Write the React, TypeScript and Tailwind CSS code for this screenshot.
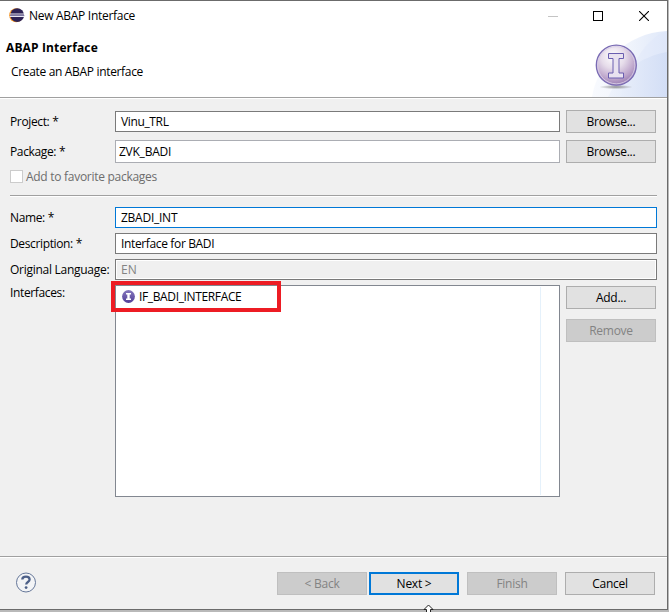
import type { ReactNode } from "react";

function EclipseIcon() {
  return (
    <svg width="16" height="16" viewBox="0 0 16 16" className="shrink-0">
      <circle cx="7.2" cy="7.2" r="7" fill="#f7941e" />
      <circle cx="8.2" cy="7.2" r="6.9" fill="#2c2255" />
      <path d="M0.7 6h14.600M0.7 8.500h14.600" stroke="#e9e7f2" strokeWidth="1.100" />
      <path d="M1 7.250h14" stroke="#8d88b0" strokeWidth="1.200" />
    </svg>
  );
}

function HeaderArt() {
  return (
    <svg width="77" height="67" viewBox="0 0 77 67" className="block">
      <defs>
        <linearGradient id="wave" x1="0" y1="0" x2="1" y2="0">
          <stop offset="0" stopColor="#f8fafe" />
          <stop offset="0.5" stopColor="#f0f4fc" />
          <stop offset="1" stopColor="#dfe8f9" />
        </linearGradient>
        <linearGradient id="wave2" x1="0" y1="0" x2="1" y2="0">
          <stop offset="0" stopColor="#edf2fb" />
          <stop offset="1" stopColor="#d0dcf5" />
        </linearGradient>
        <radialGradient id="orb" cx="0.42" cy="0.28" r="0.75">
          <stop offset="0" stopColor="#ffffff" />
          <stop offset="0.4" stopColor="#e6dcea" />
          <stop offset="0.75" stopColor="#bda5cb" />
          <stop offset="1" stopColor="#9377ae" />
        </radialGradient>
        <radialGradient id="orbShadow">
          <stop offset="0" stopColor="#777" stopOpacity="0.8" />
          <stop offset="1" stopColor="#777" stopOpacity="0" />
        </radialGradient>
      </defs>
      <path d="M2 67C7 35 35 3 77 1V67Z" fill="url(#wave)" />
      <path d="M30 67C42 34 55 8 77 1V67Z" fill="#dce6f9" opacity="0.35" />
      <path d="M18 67C30 42 50 27 77 22V67Z" fill="url(#wave2)" opacity="0.8" />
      <ellipse cx="26" cy="57" rx="17" ry="2.2" fill="url(#orbShadow)" />
      <circle cx="26.3" cy="35.2" r="20" fill="url(#orb)" stroke="#796bb4" strokeWidth="1.3" />
      <circle cx="26.3" cy="35.2" r="18.6" fill="none" stroke="#d8cee6" strokeWidth="0.9" />
      <path
        d="M18.500 23.500h15v5h-4.500v14.500h4.500v5h-15v-5h4.500v-14.500h-4.500z"
        fill="#e9e2f0"
        stroke="#6a5eb0"
        strokeWidth="1"
      />
    </svg>
  );
}

function InterfaceIcon() {
  return (
    <svg width="14" height="14" viewBox="0 0 14 14" className="shrink-0">
      <defs>
        <linearGradient id="smallOrb" x1="0" y1="0" x2="0" y2="1">
          <stop offset="0" stopColor="#8678bd" />
          <stop offset="1" stopColor="#523f98" />
        </linearGradient>
      </defs>
      <circle cx="6.500" cy="6.500" r="6.400" fill="url(#smallOrb)" />
      <path d="M4 3h5v1.500H7.700v4H9V10H4V8.500h1.300v-4H4z" fill="#fff" />
    </svg>
  );
}

function HelpIcon() {
  return (
    <svg width="22" height="22" viewBox="0 0 22 22" className="relative -top-0.5">
      <circle cx="11" cy="11.500" r="9.500" fill="#f3f4f6" stroke="#657799" strokeWidth="1" />
      <path
        d="M7.300 8.600C7.300 6.300 8.900 5.700 11 5.700s3.600 1 3.600 2.900c0 2.400-3.400 2.500-3.400 4.900"
        fill="none"
        stroke="#4d6088"
        strokeWidth="2.300"
      />
      <circle cx="11.100" cy="16.600" r="1.400" fill="#4d6088" />
    </svg>
  );
}

interface ButtonProps {
  children: ReactNode;
  disabled?: boolean;
  primary?: boolean;
}

function Button({ children, disabled, primary }: ButtonProps) {
  const look = disabled
    ? "border border-[#bfbfbf] bg-[#cccccc] text-[#838383]"
    : primary
      ? "border-2 border-[#0078d7] bg-[#e1e1e1]"
      : "border border-[#adadad] bg-[#e1e1e1]";
  return (
    <button disabled={disabled} className={`flex h-[23px] w-[90px] shrink-0 items-center justify-center leading-none tracking-[-0.25px] ${look}`}>
      {children}
    </button>
  );
}

function Label({ children }: { children: ReactNode }) {
  return <span className="w-[105px] shrink-0 whitespace-nowrap leading-4">{children}</span>;
}

function Divider() {
  return <div className="h-0.5 border-t border-[#a0a0a0] bg-white" />;
}

export default function App() {
  return (
    <div
      className="h-[612px] w-[669px] overflow-hidden bg-[#b9b9b9] text-[12px] tracking-[-0.36px] text-black"
      style={{ fontFamily: '"Segoe UI", "Open Sans", "Noto Sans", sans-serif' }}
    >
      <div className="relative flex h-[610px] w-[668px] flex-col border-t border-r border-b border-[#6b6b6b] bg-[#f0f0f0]">
        <header className="relative h-24 shrink-0 bg-white">
          <div className="flex h-[30px] items-center pl-[9px]">
            <EclipseIcon />
            <span className="ml-1 tracking-[-0.29px]">New ABAP Interface</span>
            <div className="ml-auto flex items-center pr-[18px]">
              <svg width="10" height="10" shapeRendering="crispEdges" className="mr-[35px]"><path d="M0 5.500h10" stroke="#c4c4c4" /></svg>
              <svg width="10" height="10" shapeRendering="crispEdges" className="mr-9"><rect x=".5" y=".5" width="9" height="9" fill="none" stroke="#000" /></svg>
              <svg width="10" height="10"><path d="M0 0l10 10M10 0L0 10" stroke="#000" strokeWidth="1.100" /></svg>
            </div>
          </div>
          <h1 className="mt-[9px] pl-1.5 font-bold leading-4 tracking-[0.13px]">ABAP Interface</h1>
          <p className="mt-2 pl-[11px] leading-4 tracking-[-0.33px]">Create an ABAP interface</p>
          <div className="absolute right-0 bottom-0">
            <HeaderArt />
          </div>
        </header>
        <Divider />

        <main className="flex flex-col pt-[11px] pr-2.5 pl-2.5">
          <div className="flex items-center">
            <Label>Project: *</Label>
            <div className="mr-1.5 flex h-[21px] w-[445px] items-center border border-[#7a7a7a] bg-white pl-[5px]">Vinu_TRL</div>
            <Button>Browse...</Button>
          </div>
          <div className="mt-[7px] flex items-center">
            <Label>Package: *</Label>
            <div className="mr-1.5 flex h-[23px] w-[445px] items-center border border-[#abadb3] bg-white pl-[3px] tracking-[-0.25px]">ZVK_BADI</div>
            <Button>Browse...</Button>
          </div>
          <div className="mt-[7px] flex h-[13px] items-center tracking-[-0.28px] text-[#6d6d6d]">
            <span className="mr-[3px] size-[13px] border border-[#cccccc] bg-white" />
            Add to favorite packages
          </div>
          <div className="mt-3 w-[647px]"><Divider /></div>

          <div className="mt-2.5 flex items-center">
            <Label>Name: *</Label>
            <div className="flex h-[21px] w-[542px] shrink-0 items-center border border-[#0078d7] bg-white pl-[5px] tracking-[-0.25px]">ZBADI_INT</div>
          </div>
          <div className="mt-[5px] flex items-center">
            <Label>Description: *</Label>
            <div className="flex h-[21px] w-[542px] shrink-0 items-center border border-[#7a7a7a] bg-white pl-[5px]">Interface for BADI</div>
          </div>
          <div className="mt-[5px] flex items-center">
            <Label><span className="tracking-[-0.27px]">Original Language:</span></Label>
            <div className="flex h-[21px] w-[542px] shrink-0 border border-[#7a7a7a] bg-white p-px">
              <div className="flex flex-1 items-center bg-[#f0f0f0] pl-1 tracking-normal text-[#838383]">EN</div>
            </div>
          </div>
          <div className="mt-[5px] flex items-start">
            <Label>Interfaces:</Label>
            <div className="relative mr-1.5 flex h-[212px] w-[445px] items-start border border-[#828790] bg-white px-0.5 py-px">
              <div className="flex h-5 flex-1 items-center gap-[3px] pl-1">
                <InterfaceIcon />
                IF_BADI_INTERFACE
              </div>
              <div className="mr-4 h-full border-r border-[#e5f1fb]" />
              <div className="absolute -top-[5px] -left-[5px] h-[31px] w-[170px] border-4 border-[#ed1c24]" />
            </div>
            <div className="mt-px flex flex-col gap-2.5">
              <Button>Add...</Button>
              <Button disabled>Remove</Button>
            </div>
          </div>
        </main>

        <footer className="mt-auto h-[53px] shrink-0">
          <Divider />
          <div className="flex items-center pt-[14px] pr-3 pl-[15px]">
            <HelpIcon />
            <div className="ml-auto flex items-center">
              <div className="mr-0.5"><Button disabled>&lt; Back</Button></div>
              <div className="mr-2"><Button primary>Next &gt;</Button></div>
              <div className="mr-2"><Button disabled>Finish</Button></div>
              <Button>Cancel</Button>
            </div>
          </div>
        </footer>
      </div>
      <svg className="absolute top-[604px] left-[422px]" width="13" height="8">
        <path d="M6.500 1L11 5.500H8.500V9h-4V5.500H2z" fill="#fff" stroke="#222" strokeWidth="1" />
      </svg>
    </div>
  );
}
